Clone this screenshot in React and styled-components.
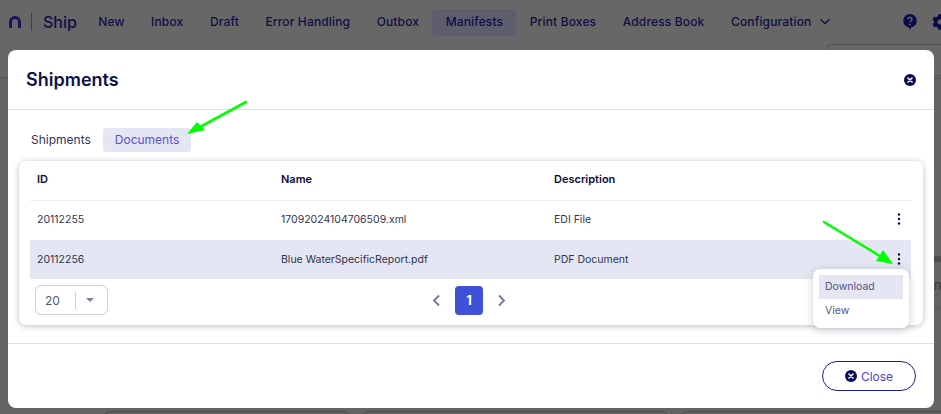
import React from "react"
import styled, { createGlobalStyle } from "styled-components"
import { FaCog } from "react-icons/fa"

const Global = createGlobalStyle`
  html, body {
    margin: 0;
    padding: 0;
    background: #636363;
    font-family: Inter, "Noto Sans", sans-serif;
  }
`

const Page = styled.div`
  position: relative;
  width: 941px;
  height: 414px;
  overflow: hidden;
  background: #636363;
`

// dimmed page behind the modal
const Nav = styled.header`
  height: 77px;
  background: #676767;
  box-shadow: 0 1px 3px rgba(0, 0, 0, 0.18);
`
const NavRow = styled.div`
  display: flex;
  align-items: center;
  height: 44px;
  padding-left: 9px;
`
const Logo = styled.svg`
  width: 12px;
  height: 12px;
  flex: none;
`
const LogoDivider = styled.span`
  flex: none;
  width: 1px;
  height: 18px;
  margin: 0 11px 0 10px;
  background: #3c3c5c;
`
const Brand = styled.span`
  flex: none;
  width: 42px;
  font-size: 16px;
  font-weight: 500;
  color: #0e0e48;
`
const NavItem = styled.span`
  flex: none;
  padding: 0 13.25px;
  height: 27px;
  line-height: 26px;
  font-size: 12px;
  font-weight: 500;
  letter-spacing: 0.15px;
  white-space: nowrap;
  color: #0e0e48;
  border-radius: 5px;
  background: ${(p) => (p.$active ? "#5e5e6e" : "transparent")};
`
const Chevron = styled.svg`
  flex: none;
  width: 12px;
  height: 8px;
  margin-left: -6px;
`
const HelpIcon = styled.svg`
  flex: none;
  width: 14px;
  height: 16px;
  margin-left: 72px;
`
const GearIcon = styled(FaCog)`
  width: 16px;
  height: 16px;
  margin-left: 15px;
  flex: none;
  color: #0a0a4c;
`
const FilterBox = styled.div`
  width: 130px;
  height: 30px;
  margin-left: auto;
  margin-right: -17px;
  border: 1px solid #525252;
  border-radius: 5px;
`
const BehindBody = styled.div`
  padding-top: 179px;
`
const BehindBand = styled.div`
  height: 6px;
  margin-left: 934px;
  background: #4d4d4d;
`
const BehindText = styled.div`
  height: 45px;
  margin-left: 934px;
  line-height: 46px;
  text-align: right;
  font-size: 13px;
  color: #3a3a3a;
  border-bottom: 1px solid #5a5a5a;
`
const BehindCards = styled.div`
  display: flex;
  gap: 14px;
  margin-top: 103px;
  padding-left: 105px;
`
const BehindCard = styled.div`
  flex: none;
  width: ${(p) => p.$w}px;
  height: 30px;
  border: 1px solid #4a4a4a;
  border-radius: 5px;
`

// modal
const Modal = styled.section`
  position: absolute;
  left: 8px;
  top: 50px;
  width: 926px;
  height: 358px;
  display: flex;
  flex-direction: column;
  background: #fff;
  border-radius: 8px;
  color: #0e0e48;
`
const ModalHeader = styled.div`
  display: flex;
  align-items: center;
  justify-content: space-between;
  height: 59px;
  padding: 0 18px;
  border-bottom: 1px solid #dedee2;
`
const Title = styled.h2`
  margin: 0;
  font-size: 18px;
  font-weight: 600;
  color: #10104a;
`
const ModalBody = styled.div`
  height: 234px;
  padding: 18px 11px 0;
  box-sizing: border-box;
  border-bottom: 1px solid #dedee2;
`
const Tabs = styled.div`
  display: flex;
  gap: 0;
  height: 24px;
  margin-bottom: 9px;
`
const Tab = styled.div`
  padding: 0 12px;
  line-height: 24px;
  font-size: 12px;
  color: ${(p) => (p.$active ? "#5a4fd0" : "#33335a")};
  background: ${(p) => (p.$active ? "#e4e6f4" : "transparent")};
  border-radius: 3px;
`
const Card = styled.div`
  position: relative;
  height: 164px;
  padding: 0 12px 0 11px;
  box-sizing: border-box;
  border-radius: 7px;
  background: #fff;
  box-shadow: 0 1px 6px rgba(20, 20, 50, 0.28);
`
const Row = styled.div`
  display: grid;
  grid-template-columns: 244px 273px 1fr 20px;
  align-items: center;
  box-sizing: border-box;
  height: ${(p) => (p.$head ? "40px" : "39px")};
  padding: 0 2px ${(p) => (p.$selected ? "1px" : "3px")} 7px;
  font-size: ${(p) => (p.$head ? "11px" : "10.5px")};
  color: #33334f;
  background: ${(p) => (p.$selected ? "#e4e6f3" : "transparent")};
  border-bottom: ${(p) => (p.$head ? "1px solid #eeeef2" : "none")};
`
const HeadCell = styled.div`
  font-weight: 600;
  color: #0c0c3c;
`
const Dots = styled.svg`
  justify-self: center;
  width: 4px;
  height: 12px;
`
const Pager = styled.div`
  display: grid;
  grid-template-columns: 1fr auto 1fr;
  align-items: center;
  padding: 6px 8px 0 5px;
`
const PageSize = styled.div`
  display: flex;
  align-items: center;
  width: 73px;
  height: 30px;
  box-sizing: border-box;
  padding-left: 9px;
  border: 1px solid #cfcfdc;
  border-radius: 6px;
  font-size: 12px;
  color: #55557a;
`
const SizeDivider = styled.span`
  width: 1px;
  height: 17px;
  margin: 0 10px 0 15px;
  background: #cfcfdc;
`
const Caret = styled.span`
  width: 0;
  height: 0;
  border-left: 4px solid transparent;
  border-right: 4px solid transparent;
  border-top: 4px solid #7d7d98;
`
const PageControls = styled.div`
  display: flex;
  align-items: center;
  gap: 14px;
`
const PageArrow = styled.svg`
  width: 9px;
  height: 13px;
`
const PageNumber = styled.div`
  width: 28px;
  height: 29px;
  line-height: 29px;
  text-align: center;
  font-size: 13px;
  font-weight: 700;
  color: #fff;
  background: #3f51d8;
  border-radius: 4px;
`
const Menu = styled.div`
  position: absolute;
  right: 14px;
  top: 108px;
  width: 96px;
  height: 59px;
  box-sizing: border-box;
  padding: 6px;
  background: #fff;
  border-radius: 7px;
  box-shadow: 0 2px 8px rgba(20, 20, 50, 0.22);
`
const MenuItem = styled.div`
  height: 24px;
  line-height: 23px;
  padding-left: 6px;
  font-size: 10.5px;
  color: #55557a;
  background: ${(p) => (p.$active ? "#e4e6f3" : "transparent")};
`
const ModalFooter = styled.div`
  display: flex;
  justify-content: flex-end;
  padding: 17px 18px 0 0;
`
const CloseButton = styled.button`
  display: flex;
  align-items: center;
  justify-content: center;
  gap: 4px;
  width: 94px;
  height: 30px;
  padding: 0;
  background: #fff;
  border: 1px solid #1a1a9c;
  border-radius: 15px;
  font-family: inherit;
  font-size: 12px;
  color: #4f45c4;
`
const Pointer = styled.svg`
  position: absolute;
  left: 0;
  top: 0;
  pointer-events: none;
`

const CloseIcon = ({ size = 12 }) => (
  <svg width={size} height={size} viewBox="0 0 12 12">
    <circle cx="6" cy="6" r="6" fill="#0b0b55" />
    <path d="M4 4l4 4M8 4l-4 4" stroke="#fff" strokeWidth="1.6" strokeLinecap="round" />
  </svg>
)

const MoreDots = () => (
  <Dots viewBox="0 0 4 12">
    <circle cx="2" cy="1.5" r="1.2" fill="#0b0b40" />
    <circle cx="2" cy="6" r="1.2" fill="#0b0b40" />
    <circle cx="2" cy="10.5" r="1.2" fill="#0b0b40" />
  </Dots>
)

const navItems = ["New", "Inbox", "Draft", "Error Handling", "Outbox", "Manifests", "Print Boxes", "Address Book", "Configuration"]

const App = () => {
  return (
    <Page>
      <Global />
      <Nav>
        <NavRow>
          <Logo viewBox="0 0 12 12">
            <path d="M1.5 12V6a4.5 4.5 0 0 1 9 0v6" fill="none" stroke="#14145a" strokeWidth="3" />
          </Logo>
          <LogoDivider />
          <Brand>Ship</Brand>
          {navItems.map((item) => (
            <NavItem key={item} $active={item === "Manifests"}>
              {item}
            </NavItem>
          ))}
          <Chevron viewBox="0 0 12 8">
            <path d="M1.5 1.5L6 5.5l4.5-4" fill="none" stroke="#0e0e48" strokeWidth="1.4" />
          </Chevron>
          <HelpIcon viewBox="0 0 14 16">
            <path d="M7 0a6.7 6.7 0 0 1 1.2 13.3L7 16l-1.2-2.7A6.7 6.7 0 0 1 7 0z" fill="#0a0a4c" />
            <path d="M5 5.2a2 2 0 1 1 3 1.8c-.7.4-1 .8-1 1.6" fill="none" stroke="#676767" strokeWidth="1.4" />
            <circle cx="7" cy="10.6" r="0.9" fill="#676767" />
          </HelpIcon>
          <GearIcon />
        </NavRow>
        <FilterBox />
      </Nav>
      <BehindBody>
        <BehindBand />
        <BehindText>m</BehindText>
        <BehindCards>
          <BehindCard $w={242} />
          <BehindCard $w={303} />
          <BehindCard $w={300} />
        </BehindCards>
      </BehindBody>

      <Modal>
        <ModalHeader>
          <Title>Shipments</Title>
          <CloseIcon />
        </ModalHeader>
        <ModalBody>
          <Tabs>
            <Tab>Shipments</Tab>
            <Tab $active>Documents</Tab>
          </Tabs>
          <Card>
            <Row $head>
              <HeadCell>ID</HeadCell>
              <HeadCell>Name</HeadCell>
              <HeadCell>Description</HeadCell>
            </Row>
            <Row>
              <div>20112255</div>
              <div>17092024104706509.xml</div>
              <div>EDI File</div>
              <MoreDots />
            </Row>
            <Row $selected>
              <div>20112256</div>
              <div>Blue WaterSpecificReport.pdf</div>
              <div>PDF Document</div>
              <MoreDots />
            </Row>
            <Pager>
              <PageSize>
                20
                <SizeDivider />
                <Caret />
              </PageSize>
              <PageControls>
                <PageArrow viewBox="0 0 9 13">
                  <path d="M7 1.5L2 6.5l5 5" fill="none" stroke="#6f7696" strokeWidth="1.8" />
                </PageArrow>
                <PageNumber>1</PageNumber>
                <PageArrow viewBox="0 0 9 13">
                  <path d="M2 1.5l5 5-5 5" fill="none" stroke="#6f7696" strokeWidth="1.8" />
                </PageArrow>
              </PageControls>
            </Pager>
            <Menu>
              <MenuItem $active>Download</MenuItem>
              <MenuItem>View</MenuItem>
            </Menu>
          </Card>
        </ModalBody>
        <ModalFooter>
          <CloseButton>
            <CloseIcon />
            Close
          </CloseButton>
        </ModalFooter>
      </Modal>

      <Pointer width="941" height="414" viewBox="0 0 941 414">
        <path d="M246 102L200 127" stroke="#0f0" strokeWidth="2.6" strokeLinecap="round" />
        <path d="M187 134L197 122L205 130z" fill="#0f0" />
        <path d="M824 222L880 256" stroke="#0f0" strokeWidth="2.6" strokeLinecap="round" />
        <path d="M893 264L876 261L883 250z" fill="#0f0" />
      </Pointer>
    </Page>
  )
}

export default App
